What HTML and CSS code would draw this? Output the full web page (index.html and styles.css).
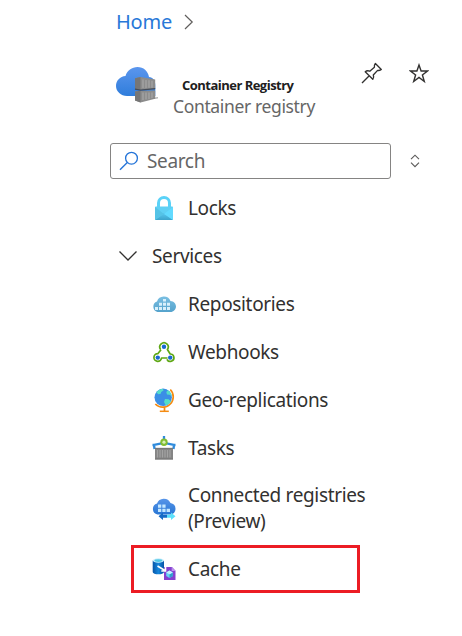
FILE: index.html
```
<!DOCTYPE html>
<html lang="en">
<head>
<meta charset="utf-8">
<title>Container Registry</title>
<link rel="stylesheet" href="styles.css">
</head>
<body>
<main class="blade">
  <nav class="crumbs">
    <a class="home">Home</a>
    <svg width="12" height="18" viewBox="0 0 12 18"><path d="M2 2l7.200 7L2 16" fill="none" stroke="#605e5c" stroke-width="1.200"/></svg>
  </nav>

  <header class="head">
    <svg class="logo" width="46" height="40" viewBox="0 0 46 40">
      <defs><linearGradient id="cloud" x1="0" y1="0" x2="0" y2="1"><stop offset="0" stop-color="#5b96ee"/><stop offset="1" stop-color="#2f7ddb"/></linearGradient></defs>
      <path d="M11 30C5 30 0 25.500 0 20c0-5.500 4-9.500 9.500-10C11 4.500 16 1 21.500 1c6 0 10.500 4 11.500 10 4 .5 6.300 3.500 6.300 8v11z" fill="url(#cloud)"/>
      <path d="M19 12.200l5.500-1.200 14.700 2.500v9.500L24.500 24l-5.500-1zM19 25.500l5.500-.8 14.700-.2v8.300l-14.700 3.700-5.500-2z" fill="#8c8c8c"/>
      <path d="M19 12.200l5.500-1.200V24l-5.500-1zM19 25.500l5.500-.8v11.800l-5.500-2z" fill="#767676"/>
      <path d="M27 13.500v8.500M30 14v8M33 14.300v7.500M36 14.800v7M27 26.500v7.500M30 26.500v7M33 26.500v6.500M36 26.500v5.500" stroke="#a5a5a5" stroke-width="1.300"/>
      <path d="M19 23.200l5.500 1 14.700-1.500" fill="none" stroke="#454c58" stroke-width="1.300"/>
      <path d="M36 32.500l6-.7" stroke="#888" stroke-width=".9"/>
    </svg>
    <div class="names">
      <h1 class="title">Container Registry</h1>
      <p class="kind">Container registry</p>
    </div>
    <svg class="pin" width="22" height="22" viewBox="0 0 22 22"><path d="M1 21l7-7M4.200 9.700l7.600 7.600c1-1.300 1.200-2.700.5-4.300l4.300-4.600c1.200.3 2.500-.1 3.700-1L14.400 1.500c-.9 1.200-1.300 2.500-1 3.700L8.800 9.200c-1.600-.6-3.300-.5-4.600.5z" fill="none" stroke="#323130" stroke-width="1.350" stroke-linejoin="round"/></svg>
    <svg class="star" width="20" height="21" viewBox="0 0 20 21"><path d="M10 2l2.100 6h6.400l-5.100 3.900 1.900 6.600-5.300-4-5.300 4 1.900-6.600L1.500 8h6.400z" fill="none" stroke="#323130" stroke-width="1.400"/></svg>
  </header>

  <div class="tools">
    <div class="search">
      <svg width="20" height="20" viewBox="0 0 20 20"><path d="M1 18.700l7.300-7.200" stroke="#2474d8" stroke-width="1.400"/><circle cx="12.500" cy="7.200" r="5.900" fill="none" stroke="#2474d8" stroke-width="1.300"/></svg>
      <span class="label hint">Search</span>
    </div>
    <svg class="sort" width="10" height="14" viewBox="0 0 10 14"><path d="M1 5.200l4-4 4 4M1 8.600l4 4 4-4" fill="none" stroke="#5c5b5a" stroke-width="1.150"/></svg>
  </div>

  <ul class="menu">
    <li class="item">
      <svg width="24" height="26" viewBox="0 0 24 26">
        <defs><linearGradient id="lock" x1="0" y1="0" x2="0" y2="1"><stop offset="0" stop-color="#58c8ef"/><stop offset="1" stop-color="#3ca4cc"/></linearGradient></defs>
        <path d="M6.500 13V8a5.500 5.500 0 0 1 11 0v5" fill="none" stroke="#5ad2f8" stroke-width="3"/>
        <rect x="3" y="11.500" width="18" height="13.500" rx=".8" fill="#5fd0f4"/>
        <path d="M3 25l9-7 9 7z" fill="url(#lock)"/><path d="M3 12l9 7-9 6z" fill="#55c3e6"/><path d="M21 12l-9 7 9 6z" fill="#62daff"/>
      </svg>
      <span class="label">Locks</span>
    </li>
    <li class="group">
      <svg width="20" height="12" viewBox="0 0 20 12"><path d="M1.500 1.500L10 10l8.500-8.500" fill="none" stroke="#323130" stroke-width="1.350"/></svg>
      <span class="label">Services</span>
    </li>
    <li class="item">
      <svg width="24" height="24" viewBox="0 0 24 24">
        <defs><linearGradient id="repo" x1="0" y1="0" x2="0" y2="1"><stop offset="0" stop-color="#7abfe2"/><stop offset="1" stop-color="#55a3cc"/></linearGradient></defs>
        <path d="M5.500 20A5.500 5.500 0 0 1 5 9.500 7.200 7.200 0 0 1 18.500 9c3.200.2 5.500 2.600 5.500 5.500S21.500 20 18.500 20z" fill="url(#repo)"/>
        <path d="M11 7h3v2.500h-3zM7 10.800h3v3H7zM11 10.800h3v3h-3zM15 10.800h3v3h-3zM3 15h3v3H3zM7 15h3v3H7zM11 15h3v3h-3zM15 15h3v3h-3z" fill="#d8f0fb"/>
      </svg>
      <span class="label">Repositories</span>
    </li>
    <li class="item">
      <svg width="24" height="24" viewBox="0 0 24 24">
        <path d="M8.600 9.500a4.200 4.200 0 1 1 6.800 0L18.200 14a3.700 3.700 0 1 1-3.300 5.300M15.500 18H9.500a3.800 3.800 0 1 1-3.700-4.300L9 9.800" fill="none" stroke="#5ea714" stroke-width="1.700" stroke-linejoin="round"/>
        <circle cx="12" cy="6.800" r="2.200" fill="#1769d2"/><circle cx="5.800" cy="17.600" r="2.200" fill="#1769d2"/><circle cx="18.200" cy="17.600" r="2.200" fill="#1769d2"/>
      </svg>
      <span class="label">Webhooks</span>
    </li>
    <li class="item">
      <svg width="24" height="26" viewBox="0 0 24 26">
        <path d="M18.300 2.500a10.300 10.300 0 1 1-15 14.500M12.500 20.500v3.700" fill="none" stroke="#f48b13" stroke-width="1.700"/><path d="M7.800 24.300h9" stroke="#f48b13" stroke-width="1.500"/>
        <circle cx="11.200" cy="10.300" r="8.700" fill="#3b8fe6"/>
        <path d="M4.500 5.500C6 3.300 8 2 10.500 1.700l1.200 1.600-2.500 1.600-.5 1.900-2.400.5zM16 3.200c2.300 1.700 3.500 3.500 3.800 6l-2.300-1.500-2.500-.3-.7-2.300zM13 12l3.500.3 2.700 2-2.400 2.700-3 1.400-1.800-3.400z" fill="#54dec9"/>
      </svg>
      <span class="label">Geo-replications</span>
    </li>
    <li class="item">
      <svg width="24" height="26" viewBox="0 0 24 26">
        <path d="M2.500 14l-.5-4.200 10-2 10 2-.5 4.200M12 1v6M.5 10h3M20.500 10h3" fill="none" stroke="#2f8bdc" stroke-width="2.300"/>
        <circle cx="12" cy="7.200" r="3.700" fill="#82bd32"/><circle cx="12" cy="7.200" r="1.600" fill="#d8efb5"/>
        <path d="M3 13h18v11.500H3z" fill="#858585"/>
        <path d="M5.500 15v7.500M8 15v7.500M10.500 15v7.500M13 15v7.500M15.500 15v7.500M18 15v7.500" stroke="#a2a2a2" stroke-width="1.200"/>
        <path d="M3 13.300h18M3 24h18" stroke="#707070" stroke-width=".8"/>
      </svg>
      <span class="label">Tasks</span>
    </li>
    <li class="item two-line">
      <svg width="24" height="24" viewBox="0 0 24 24">
        <defs><linearGradient id="conn" x1="0" y1="0" x2="0" y2="1"><stop offset="0" stop-color="#5795e9"/><stop offset="1" stop-color="#2876d4"/></linearGradient></defs>
        <path d="M5.500 17.500A5.600 5.600 0 0 1 5 6.600 7.300 7.300 0 0 1 18.500 6c3 .4 5 2.700 5 5.700 0 3.300-2.300 5.800-5.500 5.800z" fill="url(#conn)"/>
        <path d="M6 7.500h3.300v3.200H6zM10.300 7.500h3.300v3.200h-3.300zM6 11.700h3.300v3.200H6zM10.300 11.700h3.300v3.200h-3.300zM14.600 11.700H18v3.200h-3.400z" fill="#c4e7ff"/>
        <path d="M6.500 19.200l4.500-3.700v2.200h4v3h-4v2.200z" fill="#176bc5"/><path d="M23.500 19.200l-4.500-3.700v2.200h-4v3h4v2.200z" fill="#5ce1fb"/>
      </svg>
      <span class="label lines"><span>Connected registries</span><span>(Preview)</span></span>
    </li>
    <li class="item marked">
      <svg width="24" height="24" viewBox="0 0 24 24">
        <defs><linearGradient id="db"><stop offset="0" stop-color="#0755a7"/><stop offset=".5" stop-color="#1687dc"/><stop offset="1" stop-color="#0755a7"/></linearGradient></defs>
        <path d="M.7 3.500v11.200c0 3.500 11.300 3.500 11.300 0V3.500z" fill="url(#db)"/><ellipse cx="6.350" cy="3.500" rx="5.650" ry="2.200" fill="#c9eefc"/><ellipse cx="6.350" cy="3.600" rx="4" ry="1.300" fill="#50c6e5"/>
        <path d="M12 10h8l3.500 3.700V23H12z" fill="#8541cf"/><path d="M19.700 10v4h3.800z" fill="#bd91ef"/>
        <path d="M17.500 13.500l3.300 1.900v3.700l-3.300 2-3.300-2v-3.700z" fill="#65d4f4"/><path d="M17.500 17.300l3.300-1.900v3.700l-3.300 2z" fill="#319dcc"/><path d="M14.200 15.400l3.300 1.900 3.300-1.900-3.300-1.900z" fill="#c4f1ff"/>
        <path d="M5.500 9l7 4.300M13.500 9.800v4.200H9.300" fill="none" stroke="#fff" stroke-width="1.600"/>
      </svg>
      <span class="label">Cache</span>
    </li>
  </ul>
</main>
</body>
</html>
```

FILE: styles.css
```
* { box-sizing: border-box; }
body { margin: 0; background: #fff; color: #323130; font: 19px/26px "Noto Sans", "Open Sans", sans-serif; }
svg { display: block; flex: none; }
h1, p, ul { margin: 0; padding: 0; }
.blade { width: 462px; height: 636px; padding-left: 110px; overflow: hidden; white-space: nowrap; }
.crumbs { display: flex; align-items: center; gap: 11px; height: 44px; padding-left: 6px; }
.home { color: #2878d8; font-size: 20px; width: 56px; letter-spacing: -.2px; }
.head { display: flex; height: 99px; padding-left: 6px; align-items: flex-start; }
.logo { margin-top: 22px; }
.names { width: 199px; padding: 31px 0 0 11px; }
.title { padding-left: 9px; font: bold 13px/20px "Open Sans", sans-serif; color: #202020; letter-spacing: -.52px; }
.kind { font-size: 17.500px; line-height: 23px; color: #666; letter-spacing: -.36px; }
.pin { margin-top: 18px; }
.star { margin: 19px 0 0 26px; }
.tools { display: flex; align-items: center; gap: 19px; height: 36px; }
.search { width: 281px; height: 36px; border: 1px solid #858483; border-radius: 3px; display: flex; align-items: center; padding-left: 8px; gap: 8px; color: #666; }
.menu { list-style: none; padding-top: 5px; }
.item, .group { display: flex; align-items: center; height: 48px; gap: 12px; }
.item { padding-left: 42px; }
.group { padding-left: 8px; gap: 14px; }
.label { letter-spacing: -.35px; padding-bottom: 1px; }
.two-line { height: 73px; }
.lines { display: flex; flex-direction: column; }
.marked { width: 229px; margin-left: 21px; padding-left: 18px; border: 3px solid #ec1c24; }
```
